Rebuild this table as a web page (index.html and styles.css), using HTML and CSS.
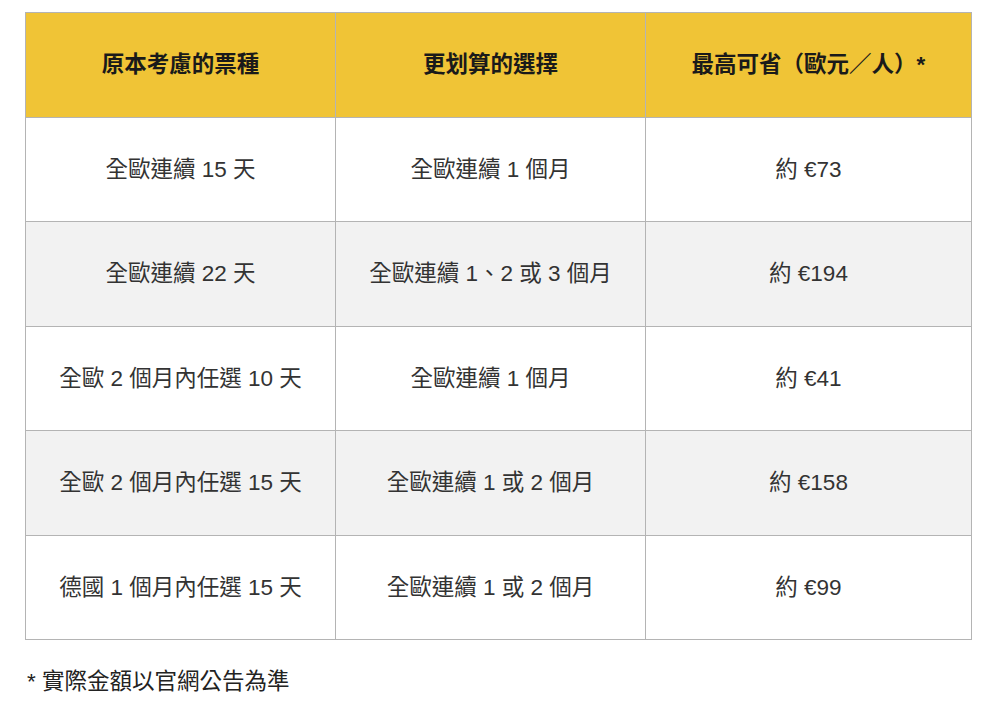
FILE: index.html
```html
<!DOCTYPE html>
<html lang="zh-Hant">
<head>
<meta charset="utf-8">
<link rel="stylesheet" href="styles.css">
</head>
<body>
<table class="pass-table">
  <thead>
    <tr>
      <th class="c1">原本考慮的票種</th>
      <th class="c2">更划算的選擇</th>
      <th class="c3">最高可省（歐元／人）*</th>
    </tr>
  </thead>
  <tbody>
    <tr><td>全歐連續 15 天</td><td>全歐連續 1 個月</td><td>約 €73</td></tr>
    <tr class="alt"><td>全歐連續 22 天</td><td>全歐連續 1、2 或 3 個月</td><td>約 €194</td></tr>
    <tr><td>全歐 2 個月內任選 10 天</td><td>全歐連續 1 個月</td><td>約 €41</td></tr>
    <tr class="alt"><td>全歐 2 個月內任選 15 天</td><td>全歐連續 1 或 2 個月</td><td>約 €158</td></tr>
    <tr><td>德國 1 個月內任選 15 天</td><td>全歐連續 1 或 2 個月</td><td>約 €99</td></tr>
  </tbody>
</table>
<p class="note">* 實際金額以官網公告為準</p>
</body>
</html>
```
FILE: styles.css
```css
html, body {
  margin: 0;
  padding: 0;
  background: #ffffff;
}
body {
  padding: 12px 0 0 25px;
  font-family: "Liberation Sans", "Noto Sans CJK TC", sans-serif;
  color: #333333;
}
.pass-table {
  border-collapse: collapse;
  table-layout: fixed;
  width: 945px;
}
.pass-table th,
.pass-table td {
  border: 1px solid #b4b4b4;
  height: 103.5px;
  padding: 0;
  text-align: center;
  vertical-align: middle;
  font-size: 22.5px;
  line-height: 1.2;
}
.pass-table th {
  background: #f0c436;
  color: #1a1a1a;
  font-weight: bold;
}
.pass-table .c1 { width: 309px; }
.pass-table .c2 { width: 309px; }
.pass-table .c3 { width: 325px; }
.pass-table td {
  color: #333333;
}
.pass-table tr.alt td {
  background: #f2f2f2;
}
.note {
  margin: 23px 0 0 2px;
  font-size: 22.5px;
  color: #222222;
}
```
